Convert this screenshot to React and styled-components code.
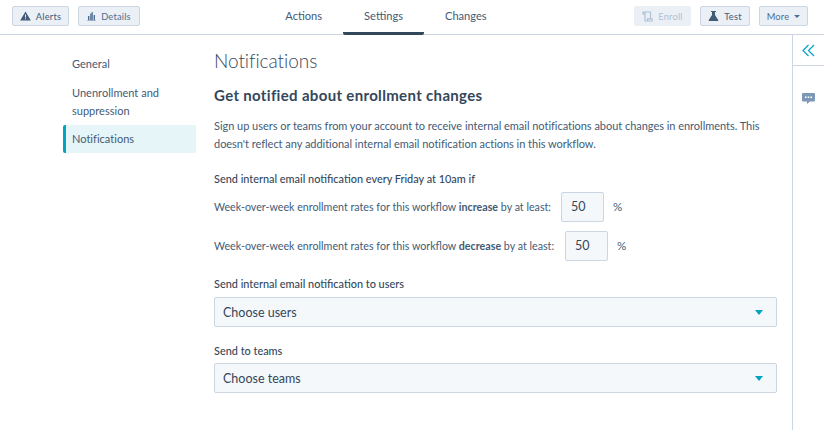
import React from "react";
import styled, { createGlobalStyle } from "styled-components";

const Global = createGlobalStyle`
  html, body { margin: 0; padding: 0; background: #fff; }
  body { font-family: Lato, "Open Sans", sans-serif; color: #33475b; overflow: hidden; }
  * { box-sizing: border-box; }
`;
const Page = styled.div`width: 824px; height: 430px; display: flex; flex-direction: column; overflow: hidden;`;
const TopBar = styled.header`
  height: 35px; flex: none; display: flex; justify-content: space-between; align-items: flex-start;
  padding: 0 16px 0 12px; border-bottom: 1px solid #cbd6e2;
`;
const Group = styled.div`display: flex; gap: ${p => p.$gap}px; padding-top: 6px;`;
const Button = styled.div`
  height: 20px; width: ${p => p.$w}px; display: flex; align-items: center; justify-content: center; gap: 5px;
  font-size: 9.3px; letter-spacing: .2px; border-radius: 2px;
  background: #eaf0f6; border: 1px solid ${p => p.$disabled ? "#eaf0f6" : "#cbd6e2"};
  color: ${p => p.$disabled ? "#b0c1d4" : p.$muted ? "#506e91" : "#425b76"};
`;
const Tabs = styled.nav`display: flex; height: 35px; margin-right: 2px;`;
const Tab = styled.div`
  height: 35px; padding: 0 21px; font-size: 11.1px; line-height: 32px; color: #425b76; white-space: nowrap;
  border-bottom: 3px solid ${p => p.$active ? "#33475b" : "transparent"}; border-radius: 0 0 2px 2px;
`;
const Body = styled.div`flex: 1; display: flex; min-height: 0;`;
const Main = styled.div`flex: 1; display: flex; padding-left: 63px;`;
const Side = styled.aside`width: 133px; flex: none; padding-top: 15px; display: flex; flex-direction: column;`;
const SideItem = styled.div`
  padding: ${p => p.$pad} 6px ${p => p.$pad} ${p => p.$active ? "6px" : "9px"};
  font-size: 11px; line-height: 18px; color: #425b76; letter-spacing: .02px;
  ${p => p.$active && `background: #e5f5f8; border-left: 3px solid #00a4bd; border-radius: 2px;`}
`;
const Content = styled.main`width: 563px; margin-left: 18px; flex: none; padding-top: 13px;`;
const Title = styled.h1`margin: 0; font-size: 19px; font-weight: 300; line-height: 26px; color: #33475b; letter-spacing: -.05px;`;
const Sub = styled.h2`margin: 11px 0 0; font-size: 15px; font-weight: 700; line-height: 20px; color: #33475b; letter-spacing: .33px;`;
const Para = styled.p`margin: 12px 0 0; font-size: 11px; line-height: 18px; color: #425b76; letter-spacing: -.03px;`;
const Label = styled.div`margin-top: ${p => p.$mt}px; font-size: 10.9px; font-weight: 500; line-height: 16px; color: #33475b;`;
const Rate = styled.div`display: flex; align-items: center; font-size: 10.7px; color: #425b76; margin-top: ${p => p.$mt}px;`;
const RateText = styled.span`display: block; padding-bottom: 2px;`;
const Num = styled.div`
  width: 43px; height: 30px; margin: 0 9px 0 ${p => p.$ml}px; padding-left: 9px; line-height: 28px; font-size: 12.5px; color: #33475b;
  background: #f5f8fa; border: 1px solid #cbd6e2; border-radius: 2px;
`;
const Pct = styled.span`font-size: 11.5px; padding-bottom: 2px;`;
const Select = styled.div`
  height: 30px; margin-top: ${p => p.$mt}px; padding: 0 13px 0 8px; display: flex; align-items: center; justify-content: space-between;
  background: #f5f8fa; border: 1px solid #cbd6e2; border-radius: 2px; font-size: 12.5px; color: #33475b;
`;
const Caret = styled.span`width: 0; height: 0; border-left: 4.5px solid transparent; border-right: 4.5px solid transparent; border-top: 5px solid #00a4bd;`;
const Rail = styled.aside`width: 32px; flex: none; border-left: 1px solid #cbd6e2; display: flex; flex-direction: column; align-items: center;`;
const RailTop = styled.div`width: 100%; height: 31px; flex: none; border-bottom: 1px solid #cbd6e2; display: flex; align-items: center; justify-content: center;`;
const RailIcon = styled.div`margin-top: 27px; display: flex;`;
const SmallCaret = styled.span`width: 0; height: 0; border-left: 3px solid transparent; border-right: 3px solid transparent; border-top: 3px solid currentColor;`;

const Alert = () => <svg width="11" height="10" viewBox="0 0 11 10"><path d="M5.5.5 10.8 9.6H.2zM5 3.5v3h1v-3zM5 7.3v1h1v-1z" fill="#425b76" fillRule="evenodd"/></svg>;
const Bars = () => <svg width="9" height="10" viewBox="0 0 9 10" fill="#506e91"><path d="M1 5h1.4v4H1zM3.2 2.5h1.2V9H3.2zM4.6 1h1.2v8H4.6zM6.6 4h1.4v5H6.6zM.3 9.2h8.4v.6H.3z"/></svg>;
const Scroll = () => <svg width="11" height="11" viewBox="0 0 11 11" fill="none" stroke="#b0c1d4" strokeWidth="1.2"><path d="M3 1h5.5v6.5M1 1h2v1.8H1zM3 2.8V10h7V7.8H5.5V10"/></svg>;
const Flask = () => <svg width="11" height="10" viewBox="0 0 11 10" fill="#425b76"><path d="M3 0h5v1H7v3l3.2 5v1H.8V9L4 4V1H3z"/></svg>;
const Chevrons = () => <svg width="13" height="13" viewBox="0 0 13 13" fill="none" stroke="#00a4bd" strokeWidth="1.2"><path d="M6.5 1 1 6.5 6.5 12M12 1 6.5 6.5 12 12"/></svg>;
const Chat = () => <svg width="13" height="11" viewBox="0 0 13 11"><path d="M1 0h11a1 1 0 0 1 1 1v6.5a1 1 0 0 1-1 1H8L5 11V8.5H1a1 1 0 0 1-1-1V1a1 1 0 0 1 1-1z" fill="#7c98b6"/><path d="M3 3.5h1.6v1.6H3zM5.7 3.5h1.6v1.6H5.7zM8.4 3.5H10v1.6H8.4z" fill="#fff"/></svg>;

export default function App() {
  return (
    <Page>
      <Global />
      <TopBar>
        <Group $gap={9}>
          <Button $w={57}><Alert />Alerts</Button>
          <Button $w={62} $muted><Bars />Details</Button>
        </Group>
        <Tabs>
          <Tab>Actions</Tab>
          <Tab $active>Settings</Tab>
          <Tab>Changes</Tab>
        </Tabs>
        <Group $gap={9}>
          <Button $w={57} $disabled><Scroll />Enroll</Button>
          <Button $w={50}><Flask />Test</Button>
          <Button $w={49} $muted>More<SmallCaret /></Button>
        </Group>
      </TopBar>
      <Body>
        <Main>
          <Side>
            <SideItem $pad="5px">General</SideItem>
            <SideItem $pad="5.5px">Unenrollment and suppression</SideItem>
            <SideItem $pad="5px" $active>Notifications</SideItem>
          </Side>
          <Content>
            <Title>Notifications</Title>
            <Sub>Get notified about enrollment changes</Sub>
            <Para>Sign up users or teams from your account to receive internal email notifications about changes in enrollments. This doesn't reflect any additional internal email notification actions in this workflow.</Para>
            <Label $mt={18}>Send internal email notification every Friday at 10am if</Label>
            <Rate $mt={5}><RateText>Week-over-week enrollment rates for this workflow <b>increase</b> by at least:</RateText><Num $ml={10}>50</Num><Pct>%</Pct></Rate>
            <Rate $mt={9}><RateText>Week-over-week enrollment rates for this workflow <b>decrease</b> by at least:</RateText><Num $ml={11}>50</Num><Pct>%</Pct></Rate>
            <Label $mt={15}>Send internal email notification to users</Label>
            <Select $mt={5}>Choose users<Caret /></Select>
            <Label $mt={16}>Send to teams</Label>
            <Select $mt={4}>Choose teams<Caret /></Select>
          </Content>
        </Main>
        <Rail>
          <RailTop><Chevrons /></RailTop>
          <RailIcon><Chat /></RailIcon>
        </Rail>
      </Body>
    </Page>
  );
}
